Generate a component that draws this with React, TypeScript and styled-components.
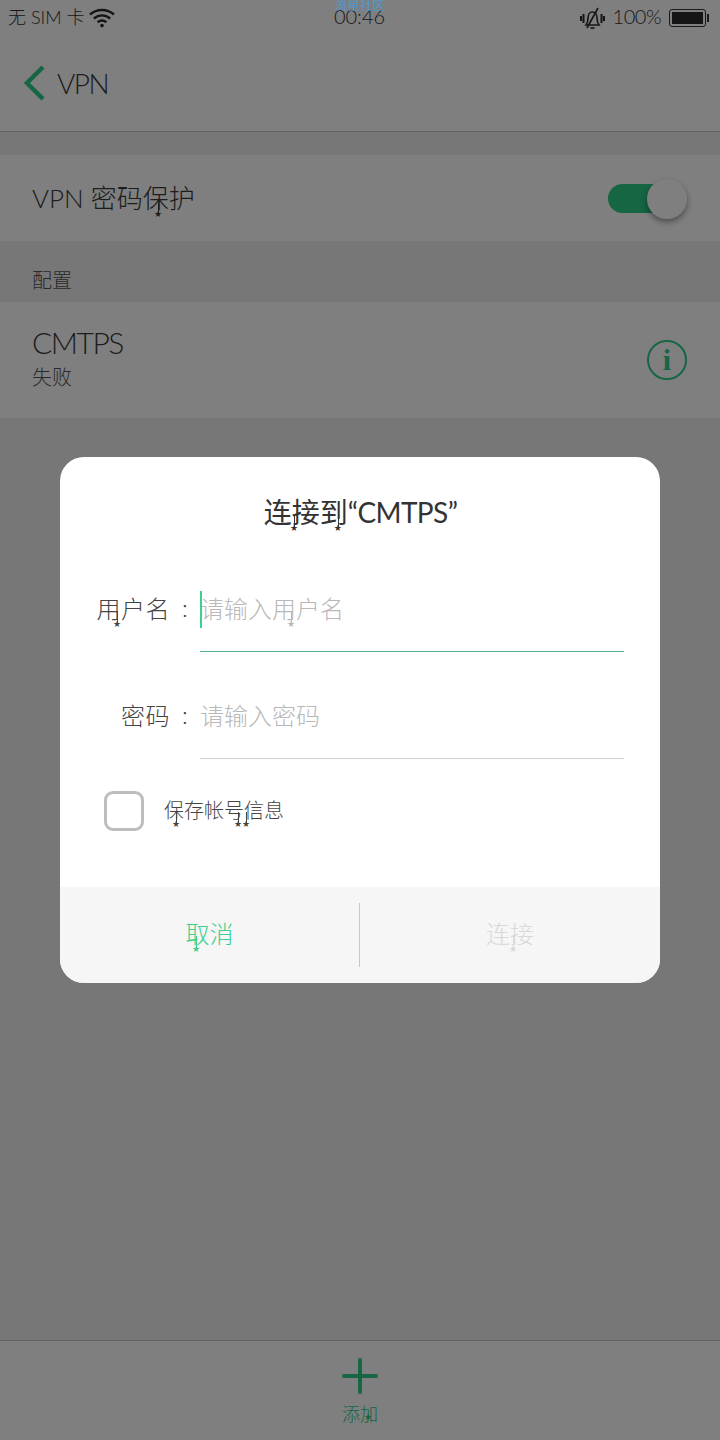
import { createGlobalStyle, styled } from "styled-components";

const GlobalStyle = createGlobalStyle`
  html, body {
    margin: 0;
    padding: 0;
    background: #eeeeee;
  }
  * {
    box-sizing: border-box;
  }
`;

const FONT = `Lato, "Noto Sans CJK SC", sans-serif`;

const Screen = styled.div`
  position: relative;
  width: 720px;
  height: 1440px;
  display: flex;
  flex-direction: column;
  overflow: hidden;
  background: #eeeeee;
  font-family: ${FONT};
  font-weight: 300;
  color: #3a3a3a;
`;

// status bar
const StatusBar = styled.div`
  height: 36px;
  display: grid;
  grid-template-columns: 1fr auto 1fr;
  align-items: center;
  padding: 0 12px 4px 8px;
  background: #ffffff;
  color: #333;
`;

const StatusLeft = styled.div`
  display: flex;
  align-items: center;
  gap: 5px;
  font-size: 18px;
`;

const StatusRight = styled.div`
  display: flex;
  align-items: center;
  justify-content: flex-end;
  gap: 8px;
  font-size: 20px;
  letter-spacing: -0.5px;
`;

const Clock = styled.div`
  padding-left: 3px;
  font-size: 20px;
`;

const StatusSvg = styled.svg`
  margin-top: 4px;
`;

const Battery = styled.div`
  position: relative;
  width: 37px;
  height: 18px;
  margin: 3px 2px 0 0;
  padding: 2px;
  border: 1px solid #333;
  border-radius: 3px;

  &::before {
    content: "";
    display: block;
    height: 100%;
    background: #2a2a2a;
  }

  &::after {
    content: "";
    position: absolute;
    top: 4px;
    right: -4px;
    width: 2px;
    height: 8px;
    background: #333;
  }
`;

// top-of-screen watermark, not dimmed by the overlay
const Watermark = styled.div`
  position: absolute;
  z-index: 3;
  top: 0;
  left: 0;
  right: 0;
  text-align: center;
  font-size: 12.5px;
  line-height: 12px;
  color: #3aa2ee;
`;

const Header = styled.div`
  height: 96px;
  display: flex;
  align-items: center;
  gap: 12px;
  padding: 0 0 2px 23px;
  background: #ffffff;
  border-bottom: 1px solid #c4c4c4;
  font-size: 28px;
  letter-spacing: -1.5px;
`;

const Gap = styled.div`
  height: 23px;
`;

const Row = styled.div<{ $height: number }>`
  height: ${(p) => p.$height}px;
  display: flex;
  align-items: center;
  justify-content: space-between;
  padding: 0 33px 0 32px;
  background: #ffffff;
`;

const RowText = styled.div`
  padding-bottom: 6px;
`;

const RowTitle = styled.div<{ $size: number; $spacing?: number }>`
  font-size: ${(p) => p.$size}px;
  line-height: 38px;
  letter-spacing: ${(p) => p.$spacing ?? 0}px;
`;

const RowSub = styled.div`
  margin-top: 2px;
  font-size: 20px;
  line-height: 28px;
  color: #555;
`;

const SectionLabel = styled.div`
  height: 61px;
  display: flex;
  align-items: flex-end;
  padding: 0 0 8px 32px;
  font-size: 20px;
  color: #555;
`;

const Toggle = styled.div`
  position: relative;
  width: 72px;
  height: 29px;
  margin-right: 7px;
  border-radius: 15px;
  background: #2ccb86;
`;

const Knob = styled.div`
  position: absolute;
  top: -5px;
  right: -7px;
  width: 40px;
  height: 40px;
  border-radius: 50%;
  background: #ffffff;
  box-shadow: 0 3px 6px rgba(0, 0, 0, 0.4);
`;

const InfoIcon = styled.div`
  width: 40px;
  height: 40px;
  border: 2px solid #2ccb86;
  border-radius: 50%;
  display: flex;
  align-items: center;
  justify-content: center;
  font-family: "Liberation Serif", serif;
  font-weight: 700;
  font-size: 30px;
  color: #2ccb86;
`;

const Spacer = styled.div`
  flex: 1;
`;

const BottomBar = styled.div`
  height: 100px;
  display: flex;
  flex-direction: column;
  align-items: center;
  padding-top: 17px;
  border-top: 1px solid #c4c4c4;
  background: #ffffff;
  color: #2ccb86;
`;

const BottomLabel = styled.div`
  margin-top: 7px;
  font-size: 18px;
  line-height: 26px;
`;

// the dimmed layer and the dialog
const Overlay = styled.div`
  position: absolute;
  z-index: 2;
  inset: 0;
  display: flex;
  align-items: center;
  justify-content: center;
  background: rgba(0, 0, 0, 0.5);
`;

const Dialog = styled.div`
  width: 600px;
  height: 526px;
  display: flex;
  flex-direction: column;
  overflow: hidden;
  border-radius: 24px;
  background: #ffffff;
`;

const DialogTitle = styled.div`
  padding: 34px 0 0 1px;
  height: 111px;
  text-align: center;
  font-size: 28px;
  line-height: 42px;
  font-weight: 400;
  color: #333;
`;

const TitleLatin = styled.span`
  letter-spacing: -0.6px;
`;

const Field = styled.div`
  height: 107px;
  display: grid;
  grid-template-columns: 110px 30px 424px;
  padding-top: 23px;
`;

const FieldLabel = styled.div`
  text-align: right;
  font-size: 24px;
  line-height: 36px;
  letter-spacing: 0.5px;
  color: #444;
`;

const Colon = styled.div`
  text-align: center;
  font-size: 24px;
  line-height: 34px;
  color: #444;
`;

const InputBox = styled.div<{ $focused?: boolean }>`
  position: relative;
  height: 61px;
  border-bottom: 1px solid ${(p) => (p.$focused ? "#4fb08c" : "#d2d2d2")};
`;

const Cursor = styled.div`
  position: absolute;
  top: 0;
  left: 0;
  width: 2px;
  height: 37px;
  background: #3ccf8e;
`;

const Placeholder = styled.div`
  font-size: 24px;
  line-height: 36px;
  color: #b8b8b8;
`;

const SaveRow = styled.div`
  display: flex;
  align-items: center;
  gap: 20px;
  padding: 9px 0 0 44px;
`;

const CheckBox = styled.div`
  width: 40px;
  height: 40px;
  border: 3px solid #bdbdbd;
  border-radius: 9px;
`;

const SaveText = styled.div`
  padding-bottom: 4px;
  font-size: 20px;
  color: #444;
`;

const DialogFooter = styled.div`
  margin-top: auto;
  height: 96px;
  display: grid;
  grid-template-columns: 299px 1px 300px;
  align-items: center;
  background: #f6f6f6;
`;

const FooterButton = styled.div<{ $disabled?: boolean }>`
  padding-bottom: 6px;
  text-align: center;
  font-size: 24px;
  color: ${(p) => (p.$disabled ? "#d9d9d9" : "#3ccf8e")};
`;

const FooterDivider = styled.div`
  height: 64px;
  background: #c8c8c8;
`;

// glyph with a long stem ending in a small star, as the phone's theme font draws it
const Mark = styled.span<{ $x: number; $drop: number }>`
  position: relative;

  &::after {
    content: "";
    position: absolute;
    left: ${(p) => p.$x}%;
    top: 60%;
    width: 1px;
    height: ${(p) => p.$drop}px;
    background: currentColor;
  }

  &::before {
    content: "★";
    position: absolute;
    left: ${(p) => p.$x}%;
    top: calc(60% + ${(p) => p.$drop}px);
    margin: -5px 0 0 -4px;
    font-family: "DejaVu Sans", sans-serif;
    font-size: 9px;
    line-height: 9px;
  }
`;

const WifiIcon = () => (
  <StatusSvg width="26" height="20" viewBox="0 0 26 20" fill="none" stroke="#2a2a2a" strokeWidth="2.4">
    <path d="M1 6.500C8 .5 18 .5 25 6.500" />
    <path d="M4.800 10.500C9.800 6.300 16.200 6.300 21.200 10.500" />
    <path d="M8.600 14.200C11.200 12.200 14.800 12.200 17.400 14.200" />
    <circle cx="13" cy="17.600" r="1.800" fill="#2a2a2a" stroke="none" />
  </StatusSvg>
);

const MuteBellIcon = () => (
  <StatusSvg width="25" height="24" viewBox="0 0 25 24" fill="none" stroke="#2a2a2a" strokeWidth="1.600">
    <path d="M6 19c1.600-2 2-3.500 2-7 0-3.400 1.800-6 4.500-6s4.500 2.600 4.500 6c0 3.500.4 5 2 7z" />
    <path d="M10.500 22h4" />
    <path d="M18 2 7 22" />
    <path d="M3.500 8v9M1 10v5M21.500 8v9M24 10v5" strokeWidth="2" />
  </StatusSvg>
);

const BackIcon = () => (
  <svg width="22" height="36" viewBox="0 0 22 36" fill="none" stroke="#2ccb86" strokeWidth="4.500">
    <path d="M20 2 4 18l16 16" />
  </svg>
);

const PlusIcon = () => (
  <svg width="36" height="36" viewBox="0 0 36 36" stroke="#2ccb86" strokeWidth="4" strokeLinecap="round">
    <path d="M18 2v32M2 18h32" />
  </svg>
);

export default function App() {
  return (
    <>
      <GlobalStyle />
      <Screen>
        <StatusBar>
          <StatusLeft>
            无 SIM 卡
            <WifiIcon />
          </StatusLeft>
          <Clock>00:46</Clock>
          <StatusRight>
            <MuteBellIcon />
            100%
            <Battery />
          </StatusRight>
        </StatusBar>
        <Header>
          <BackIcon />
          VPN
        </Header>
        <Gap />
        <Row $height={86}>
          <RowTitle $size={26}>
            VPN 密码
            <Mark $x={60} $drop={14}>
              保
            </Mark>
            护
          </RowTitle>
          <Toggle>
            <Knob />
          </Toggle>
        </Row>
        <SectionLabel>配置</SectionLabel>
        <Row $height={116}>
          <RowText>
            <RowTitle $size={30} $spacing={-1.500}>
              CMTPS
            </RowTitle>
            <RowSub>失败</RowSub>
          </RowText>
          <InfoIcon>i</InfoIcon>
        </Row>
        <Spacer />
        <BottomBar>
          <PlusIcon />
          <BottomLabel>
            添
            <Mark $x={45} $drop={2}>
              加
            </Mark>
          </BottomLabel>
        </BottomBar>

        <Overlay>
          <Dialog>
            <DialogTitle>
              连
              <Mark $x={8} $drop={14}>
                接
              </Mark>
              <Mark $x={64} $drop={14}>
                到
              </Mark>
              <TitleLatin>“CMTPS”</TitleLatin>
            </DialogTitle>
            <Field>
              <FieldLabel>
                <Mark $x={83} $drop={14}>
                  用
                </Mark>
                户名
              </FieldLabel>
              <Colon>:</Colon>
              <InputBox $focused>
                <Cursor />
                <Placeholder>
                  请输入
                  <Mark $x={80} $drop={14}>
                    用
                  </Mark>
                  户名
                </Placeholder>
              </InputBox>
            </Field>
            <Field>
              <FieldLabel>密码</FieldLabel>
              <Colon>:</Colon>
              <InputBox>
                <Placeholder>请输入密码</Placeholder>
              </InputBox>
            </Field>
            <SaveRow>
              <CheckBox />
              <SaveText>
                <Mark $x={60} $drop={13}>
                  保
                </Mark>
                存帐
                <Mark $x={70} $drop={13}>
                  号
                </Mark>
                <Mark $x={10} $drop={13}>
                  信
                </Mark>
                息
              </SaveText>
            </SaveRow>
            <DialogFooter>
              <FooterButton>
                <Mark $x={42} $drop={14}>
                  取
                </Mark>
                消
              </FooterButton>
              <FooterDivider />
              <FooterButton $disabled>
                连
                <Mark $x={12} $drop={14}>
                  接
                </Mark>
              </FooterButton>
            </DialogFooter>
          </Dialog>
        </Overlay>
        <Watermark>流星社区</Watermark>
      </Screen>
    </>
  );
}
